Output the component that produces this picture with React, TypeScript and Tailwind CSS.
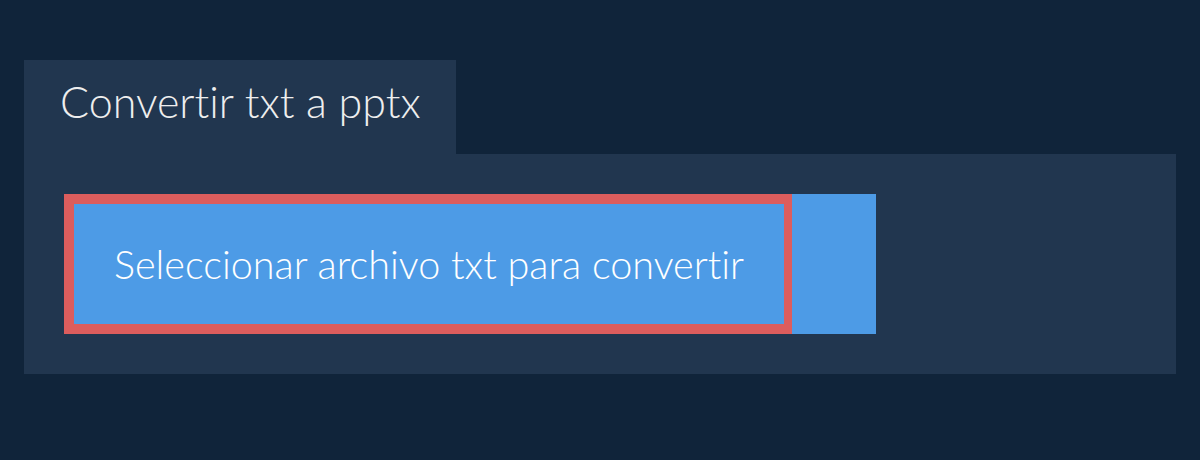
export default function App() {
  return (
    <div className="min-h-[460px] w-full bg-[#10243a] pt-[60px] px-6 font-['Lato','Liberation_Sans',sans-serif] [font-variant-ligatures:none]">
      <div className="flex">
        <div className="h-[94px] w-[432px] bg-[#21364f] pl-9 flex items-center">
          <h1 className="text-[43px] font-light text-[#eeeeee] leading-none pb-3">Convertir txt a pptx</h1>
        </div>
      </div>
      <div className="h-[220px] bg-[#21364f] p-10">
        <div className="flex h-[140px] w-[812px] bg-[#4d9be6]">
          <button className="h-full w-[728px] border-[10px] border-r-8 border-[#dc5d5d] bg-[#4d9be6] text-[39.6px] font-light text-white">
            Seleccionar archivo txt para convertir
          </button>
        </div>
      </div>
    </div>
  );
}
